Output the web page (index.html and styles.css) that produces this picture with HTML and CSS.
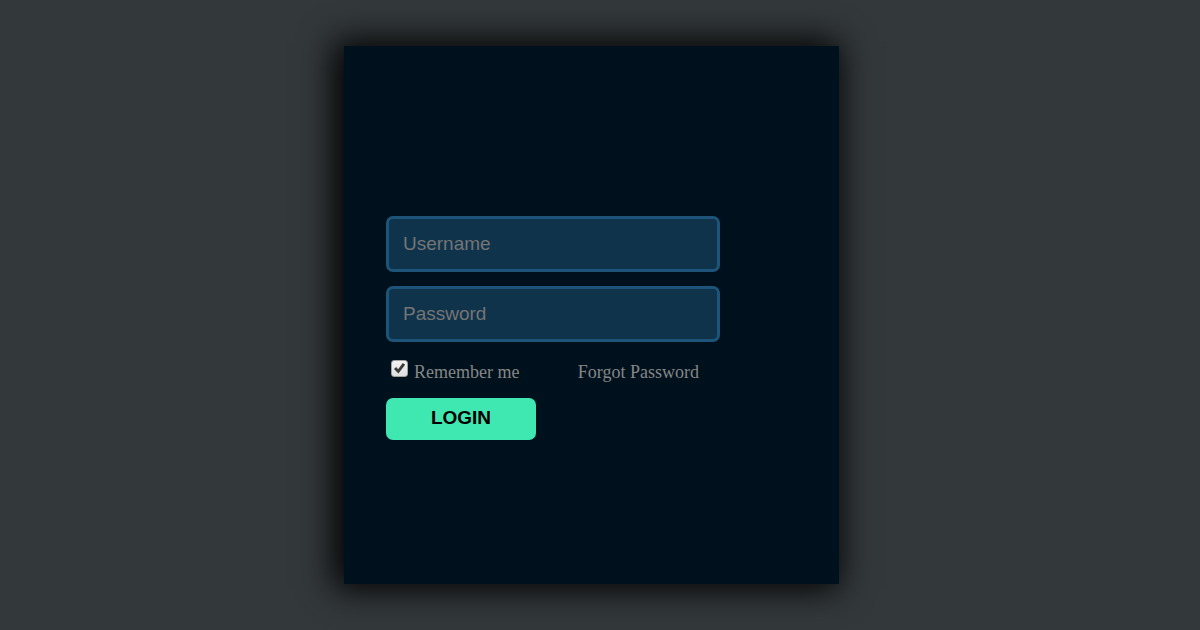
FILE: index.html
```html
<!DOCTYPE html>
<html lang="en">
<head>
<meta charset="utf-8">
<meta name="viewport" content="width=device-width, initial-scale=1">
<title>Login</title>
<link rel="stylesheet" href="styles.css">
</head>
<body class="page">
<main class="card">
<form class="form">
<input class="field" type="text" name="username" placeholder="Username" aria-label="Username">
<input class="field" type="password" name="password" placeholder="Password" aria-label="Password">
<div class="options">
<label class="remember">
<span class="tick">
<input class="box" type="checkbox" name="remember" checked>
<svg class="mark" viewBox="0 0 16 16" aria-hidden="true"><path d="M2.8 8.4 4.9 6.6 6.7 8.6 11.1 2.8 13.3 4.4 7 12.8Z" fill="#3b3b3b"/></svg>
</span>
<span class="text">Remember me</span>
</label>
<a class="forgot text" href="#">Forgot Password</a>
</div>
<button class="login" type="submit">LOGIN</button>
</form>
</main>
</body>
</html>
```
FILE: styles.css
```css
* {
  box-sizing: border-box;
}

.page {
  margin: 0;
  min-height: 100vh;
  padding: 16px 17px 16px 0;
  display: flex;
  align-items: center;
  justify-content: center;
  background: #33383b;
}

.card {
  width: 100%;
  max-width: 495px;
  padding: 170px 42px 144px;
  background: #00111e;
  box-shadow: -5px 0 32px 5px #000;
}

.form {
  display: flex;
  flex-direction: column;
  align-items: flex-start;
  max-width: 334px;
}

.field {
  width: 100%;
  height: 56px;
  margin: 0 0 14px;
  padding: 0 14px;
  border: 3px solid #1e5479;
  border-radius: 7px;
  background: #0f334b;
  color: #ddd;
  font: 19px "Liberation Sans", Arial, sans-serif;
}

.field::placeholder {
  color: #757575;
  opacity: 1;
}

.options {
  display: flex;
  width: 100%;
  justify-content: space-between;
  align-items: flex-start;
  padding: 4px 21px 15px 5px;
  color: #868686;
  font: 18px/21px "Liberation Serif", "Times New Roman", serif;
}

.remember {
  display: flex;
  align-items: flex-start;
  gap: 6px;
}

.text {
  padding-top: 2px;
}

.tick {
  display: grid;
  width: 17px;
  height: 17px;
}

.box,
.mark {
  grid-area: 1 / 1;
  width: 100%;
  height: 100%;
}

.box {
  appearance: none;
  margin: 0;
  border: 1px solid #a0a0a0;
  border-radius: 3px;
  background: linear-gradient(#f2f2f2, #dedede);
}

.mark {
  visibility: hidden;
  pointer-events: none;
}

.box:checked + .mark {
  visibility: visible;
}

.forgot {
  display: block;
  color: inherit;
  text-decoration: none;
}

.login {
  width: 150px;
  height: 42px;
  padding: 0 0 2px;
  border: 0;
  border-radius: 7px;
  background: #3fe8b1;
  color: #000;
  font: bold 19px "Liberation Sans", Arial, sans-serif;
}
```
